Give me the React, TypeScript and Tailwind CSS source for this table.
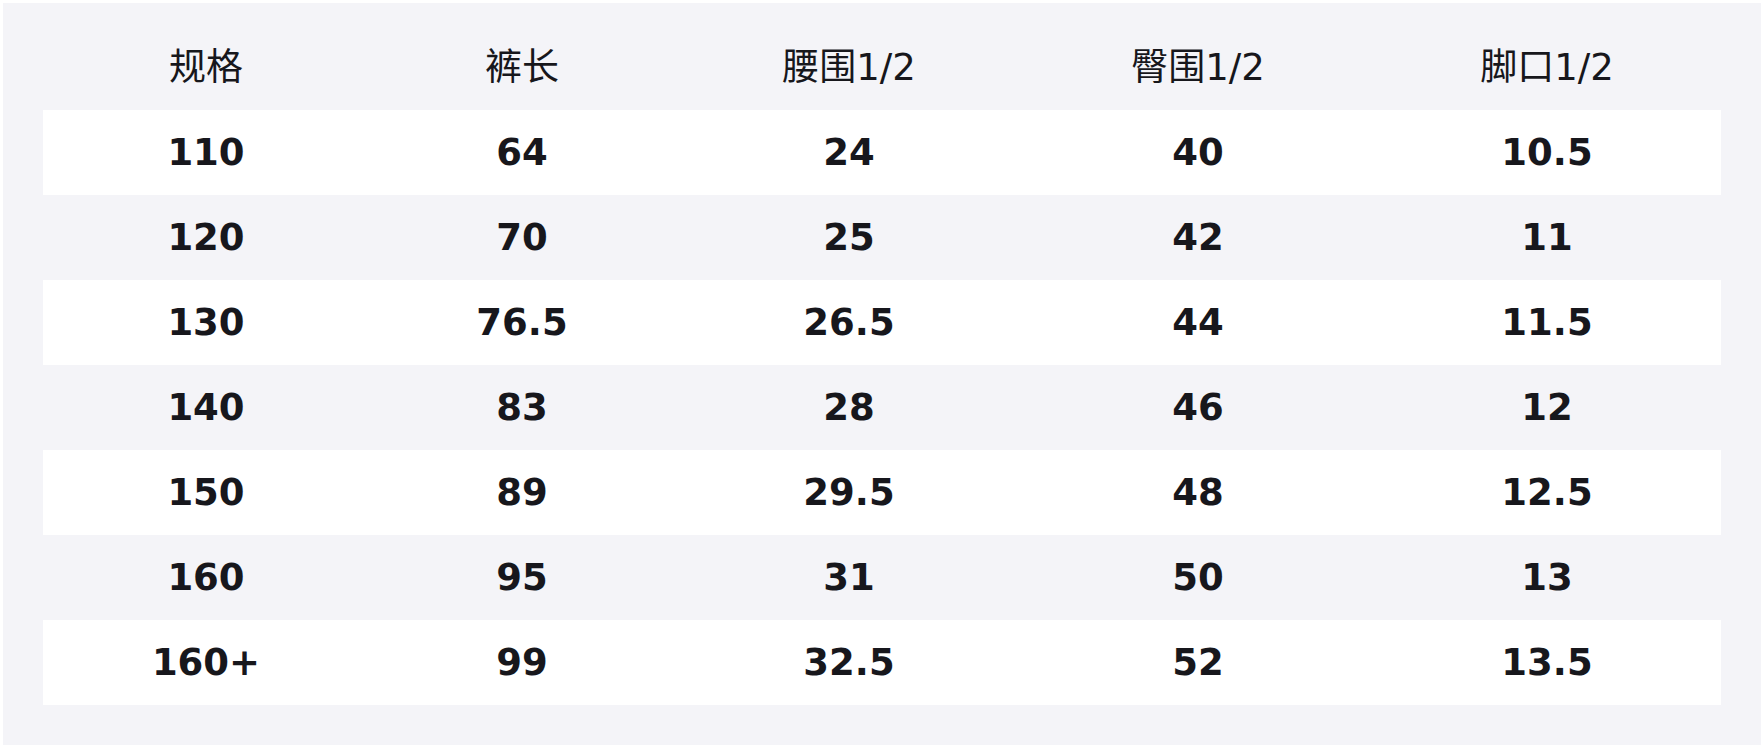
const headers = ['规格', '裤长', '腰围1/2', '臀围1/2', '脚口1/2']

const rows = [
  ['110', '64', '24', '40', '10.5'],
  ['120', '70', '25', '42', '11'],
  ['130', '76.5', '26.5', '44', '11.5'],
  ['140', '83', '28', '46', '12'],
  ['150', '89', '29.5', '48', '12.5'],
  ['160', '95', '31', '50', '13'],
  ['160+', '99', '32.5', '52', '13.5'],
]

const cols = 'grid grid-cols-[326px_306px_348px_350px_1fr]'

export default function App() {
  return (
    <div className="w-full h-[748px] bg-white p-[3px]" style={{ fontFamily: '"DejaVu Sans", "Noto Sans CJK SC", sans-serif' }}>
      <div className="h-full bg-[#f4f4f8] px-10 pt-[22px] text-[#17171c]">
        <div className={`${cols} h-[85px] items-center text-center text-[37px]`}>
          {headers.map((h) => (
            <div key={h}>{h}</div>
          ))}
        </div>
        {rows.map((r, i) => (
          <div
            key={r[0]}
            className={`${cols} h-[85px] items-center text-center text-[37px] font-bold ${i % 2 === 0 ? 'bg-white' : ''}`}
          >
            {r.map((c, j) => (
              <div key={j}>{c}</div>
            ))}
          </div>
        ))}
      </div>
    </div>
  )
}
